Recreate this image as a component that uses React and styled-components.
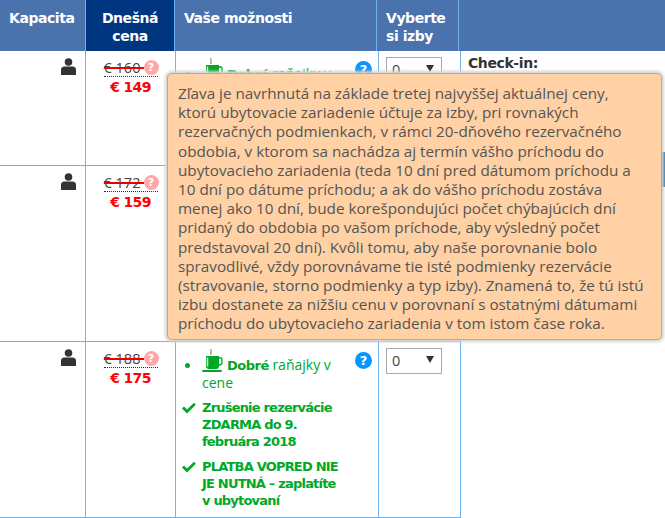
import React from "react";
import styled, { createGlobalStyle } from "styled-components";

const Global = createGlobalStyle`
  html, body { margin: 0; padding: 0; background: #fff; }
  body { width: 665px; height: 518px; overflow: hidden; font-family: "Open Sans", "Noto Sans", sans-serif; color: #333; }
`;
const Page = styled.div`position: relative; width: 665px; height: 518px; overflow: hidden;`;
const Head = styled.div`display: grid; grid-template-columns: 86px 89px 202px 82px 206px; height: 51px; background: #4a73ae;`;
const HeadCell = styled.div`
  box-sizing: border-box;
  padding: 9px ${p => p.$center ? "0" : "9px"} 0;
  font: bold 14px/18px "DejaVu Sans", sans-serif;
  letter-spacing: -0.45px;
  color: #fff;
  text-align: ${p => p.$center ? "center" : "left"};
  border-right: 1px solid ${p => p.$noLine ? "transparent" : "#6db3f2"};
  background: ${p => p.$dark ? "#003580" : "transparent"};
`;
const Body = styled.div`display: grid; grid-template-columns: 461px 204px;`;
const Rows = styled.div`display: flex; flex-direction: column;`;
const Row = styled.div`
  display: grid;
  grid-template-columns: 86px 90px 203px 82px;
  height: ${p => p.$h}px;
  box-sizing: border-box;
  border-bottom: 1px solid #6db3f2;
`;
const Cell = styled.div`
  box-sizing: border-box;
  border-right: 1px solid #6db3f2;
  min-width: 0;
`;
const PersonCell = styled(Cell)`display: flex; justify-content: flex-end; padding: 7px 9px 0 0;`;
const PriceCell = styled(Cell)`display: flex; flex-direction: column; align-items: center; padding-top: 7px;`;
const OldLine = styled.div`
  position: relative;
  width: 54px;
  height: 18px;
  border-bottom: 1px dotted #003580;
`;
const Old = styled.span`
  display: block;
  width: fit-content;
  position: relative;
  font: 14.5px/19px "Open Sans", sans-serif;
  color: #444;
  &::after {
    content: "";
    position: absolute;
    left: 0; right: -4px; top: 9px;
    height: 1.5px;
    background: #e00;
  }
`;
const Hint = styled.span`
  position: absolute;
  right: -1px;
  top: 2px;
  width: 15px;
  height: 15px;
  border-radius: 50%;
  background: #ffa8a8;
  color: #fff;
  font: bold 11px/15px "DejaVu Sans", sans-serif;
  text-align: center;
`;
const Now = styled.div`
  font: bold 14px/20px "DejaVu Sans", sans-serif;
  color: #f00;
  letter-spacing: -0.7px;
`;
const Options = styled(Cell)`position: relative; padding: 7px 8px 0 7px; color: #00a827;`;
const Meal = styled.div`
  box-sizing: border-box;
  padding-left: 19px;
  font: 14px/17px "Open Sans", sans-serif;
  width: 165px;
`;
const Dot = styled.span`
  display: inline-block;
  width: 5px; height: 5px;
  border-radius: 50%;
  background: #00a827;
  margin: 0 12px 2px -17px;
  vertical-align: middle;
`;
const Strong = styled.b`font-family: "DejaVu Sans", sans-serif; font-size: 13px; letter-spacing: -0.5px;`;
const Help = styled.span`
  position: absolute;
  right: 6px;
  top: 10px;
  width: 17px;
  height: 17px;
  border-radius: 50%;
  background: #0896ff;
  color: #fff;
  font: bold 13px/17px "DejaVu Sans", sans-serif;
  text-align: center;
`;
const Perk = styled.div`
  display: flex;
  gap: 6px;
  margin: ${p => p.$mt}px 0 0 -2px;
  font: bold 13px/17px "DejaVu Sans", sans-serif;
  letter-spacing: -0.8px;
  color: #00a827;
  svg { flex: none; margin-top: 3px; }
  span { max-width: 142px; }
`;
const Picker = styled(Cell)`padding: 6px 0 0 7px;`;
const Select = styled.div`
  box-sizing: border-box;
  width: 56px;
  height: 26px;
  border: 1px solid #a9a9a9;
  padding-left: 5px;
  display: flex;
  align-items: center;
  justify-content: space-between;
  font: 14.5px/24px "Open Sans", sans-serif;
  color: #444;
`;
const Arrow = styled.span`
  width: 0; height: 0; margin: 0 7px 3px 0;
  border-left: 4px solid transparent;
  border-right: 4px solid transparent;
  border-top: 7px solid #333;
`;
const Side = styled.div`padding: 3px 0 0 7px; display: flex; flex-direction: column;`;
const SideTitle = styled.div`font: bold 14px/18px "DejaVu Sans", sans-serif; letter-spacing: -0.4px; color: #333;`;
const Reserve = styled.div`height: 35px; margin-top: 80px; background: #0a6ab5;`;
const Tip = styled.div`
  position: absolute;
  left: 167px;
  top: 73px;
  box-sizing: border-box;
  width: 495px;
  height: 267px;
  padding: 10px 0 0 10px;
  background: #ffd1a4;
  border: 1px solid #e5a730;
  border-radius: 5px;
  box-shadow: 0 0 3px 2px #d4d4d4;
  font: 15.25px/19.2px "Open Sans", sans-serif;
  color: #555;
`;
const TipLine = styled.div`white-space: nowrap;`;
const tipLines = [
  "Zľava je navrhnutá na základe tretej najvyššej aktuálnej ceny,",
  "ktorú ubytovacie zariadenie účtuje za izby, pri rovnakých",
  "rezervačných podmienkach, v rámci 20-dňového rezervačného",
  "obdobia, v ktorom sa nachádza aj termín vášho príchodu do",
  "ubytovacieho zariadenia (teda 10 dní pred dátumom príchodu a",
  "10 dní po dátume príchodu; a ak do vášho príchodu zostáva",
  "menej ako 10 dní, bude korešpondujúci počet chýbajúcich dní",
  "pridaný do obdobia po vašom príchode, aby výsledný počet",
  "predstavoval 20 dní). Kvôli tomu, aby naše porovnanie bolo",
  "spravodlivé, vždy porovnávame tie isté podmienky rezervácie",
  "(stravovanie, storno podmienky a typ izby). Znamená to, že tú istú",
  "izbu dostanete za nižšiu cenu v porovnaní s ostatnými dátumami",
  "príchodu do ubytovacieho zariadenia v tom istom čase roka.",
];
const Cup = () => (
  <svg width="21" height="24" viewBox="0 0 21 24" style={{ verticalAlign: "-3px", marginRight: 4 }}>
    <path d="M9 0c-1 1.500 1 2 0 3.500s0 1.500 0 2.500" stroke="#8fa88f" strokeWidth="1.400" fill="none" />
    <path d="M4 7h13v10a3 3 0 0 1-3 3H7a3 3 0 0 1-3-3z" fill="#00a827" />
    <path d="M5.500 8.500v9" stroke="#c9f0d0" strokeWidth="1.500" />
    <path d="M17 9h2a1 1 0 0 1 1 1v3a3 3 0 0 1-3 3" stroke="#00a827" strokeWidth="1.300" fill="none" />
    <rect x="0" y="21" width="20" height="2" rx="1" fill="#00a827" />
  </svg>
);
const Check = () => (
  <svg width="15" height="12" viewBox="0 0 15 12"><path d="M1 6.500l2-2 3 3L13 .8l1.800 2L6 11.500z" fill="#00a827" /></svg>
);
const Person = () => (
  <svg width="15" height="17" viewBox="0 0 15 17"><circle cx="7.500" cy="4" r="3.800" fill="#333" /><path d="M0 17v-5a3.500 3.500 0 0 1 3.500-3.500h8A3.500 3.500 0 0 1 15 12v5z" fill="#333" /></svg>
);
const rows = [
  { h: 115, old: "160", now: "149" },
  { h: 176, old: "172", now: "159" },
  { h: 176, old: "188", now: "175", perks: true },
];
export default function App() {
  return (
    <Page>
      <Global />
      <Head>
        <HeadCell>Kapacita</HeadCell>
        <HeadCell $dark $center>Dnešná<br />cena</HeadCell>
        <HeadCell>Vaše možnosti</HeadCell>
        <HeadCell>Vyberte<br />si izby</HeadCell>
        <HeadCell $noLine />
      </Head>
      <Body>
        <Rows>
          {rows.map(r => (
            <Row key={r.old} $h={r.h}>
              <PersonCell><Person /></PersonCell>
              <PriceCell>
                <OldLine><Old>€ {r.old}</Old><Hint>?</Hint></OldLine>
                <Now>€ {r.now}</Now>
              </PriceCell>
              <Options>
                <Meal><Dot /><Cup /><Strong>Dobré</Strong> raňajky v cene</Meal>
                <Help>?</Help>
                {r.perks && (
                  <>
                    <Perk $mt={8}><Check /><span>Zrušenie rezervácie ZDARMA do 9. februára 2018</span></Perk>
                    <Perk $mt={8}><Check /><span>PLATBA VOPRED NIE JE NUTNÁ – zaplatíte v ubytovaní</span></Perk>
                  </>
                )}
              </Options>
              <Picker><Select>0<Arrow /></Select></Picker>
            </Row>
          ))}
        </Rows>
        <Side>
          <SideTitle>Check-in:</SideTitle>
          <Reserve />
        </Side>
      </Body>
      <Tip>
        {tipLines.map(l => <TipLine key={l}>{l}</TipLine>)}
      </Tip>
    </Page>
  );
}
